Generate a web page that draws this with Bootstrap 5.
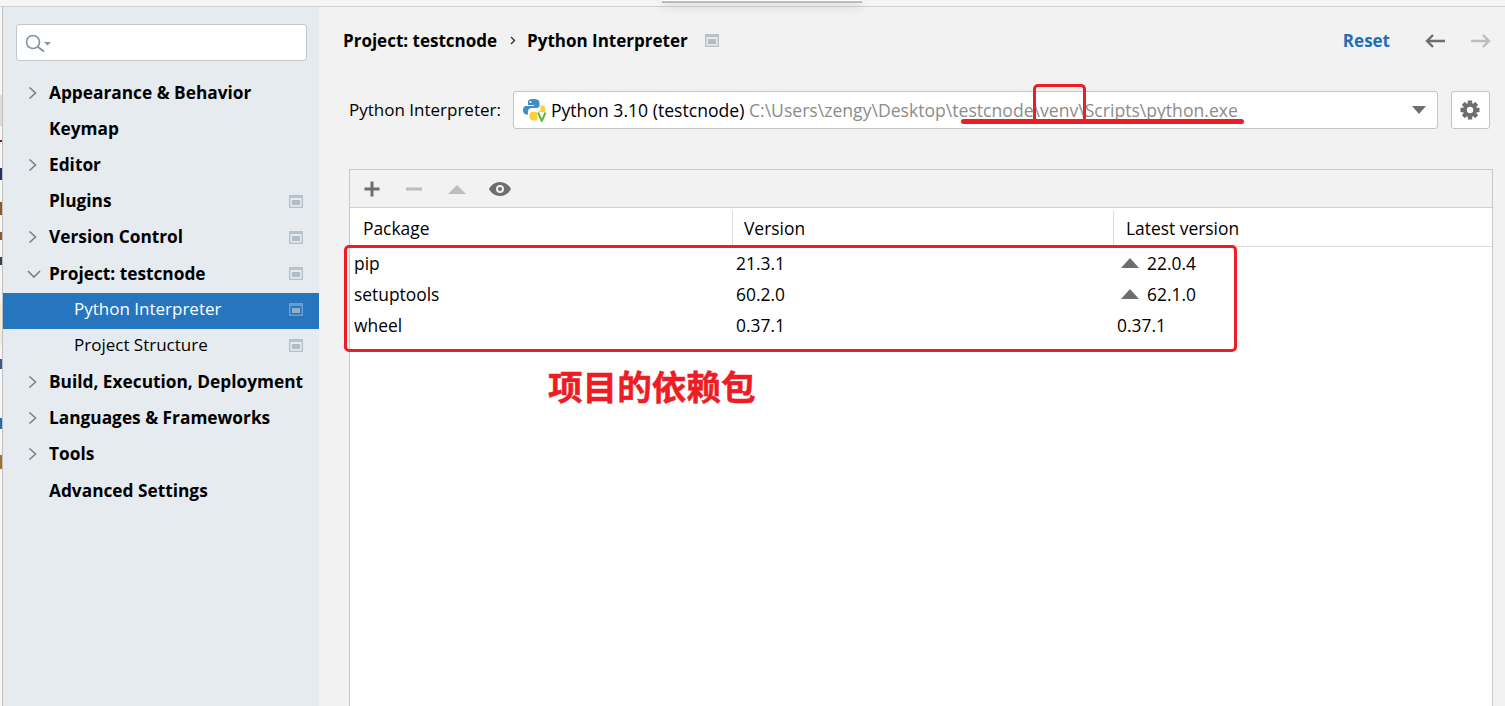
<!DOCTYPE html>
<html lang="en">
<head>
<meta charset="UTF-8">
<title>Settings</title>
<link href="https://cdn.jsdelivr.net/npm/bootstrap@5.3.0/dist/css/bootstrap.min.css" rel="stylesheet">
<style>
    html, body { height: 100%; overflow: hidden; }
    body {
        background: #f2f2f2;
        color: #000;
        font-family: "Open Sans", "Noto Sans CJK SC", sans-serif;
        font-size: 17px;
        line-height: 24px;
    }
    .topstrip { height: 7px; background: #f5f5f5; border-bottom: 1px solid #d1d1d1; }
    .popup-edge {
        position: absolute; left: 662px; top: 0; width: 200px; height: 3px;
        background: #fff; border-bottom: 2px solid #bbb; box-shadow: 0 3px 10px rgba(0,0,0,.2);
    }
    .main-area { height: 699px; }
    /* scraps of the window behind, showing along the left edge */
    .edge {
        width: 3px; flex: none; border-right: 1px solid #c0c0c0;
        background: linear-gradient(to bottom,
            #f6f6f6 0 88px, #dcdcdc 88px 119px, #f6f6f6 119px 133px, #7a1f1f 133px 135px,
            #f6f6f6 135px 161px, #1e2f6a 161px 173px, #f6f6f6 173px 195px, #8a5a2a 195px 208px,
            #f6f6f6 208px 225px, #8a5a2a 225px 233px, #f6f6f6 233px 250px, #33405a 250px 258px,
            #f6f6f6 258px 296px, #efecd9 296px 338px, #f6f6f6 338px 352px, #3a5a8a 352px 362px,
            #f6f6f6 362px 411px, #2a6ab0 411px 422px, #f6f6f6 422px 448px, #a5702a 448px 462px,
            #f6f6f6 462px);
    }
    .side { width: 316px; flex: none; background: #e6ebf0; padding-top: 17px; }
    .searchbox {
        margin: 0 13px; height: 37px; width: 291px; background: #fff;
        border: 1px solid #c4c7ca; border-radius: 3px; padding-left: 7px;
    }
    .tree { margin-top: 15px; }
    .tree-row { height: 36.2px; padding: 0 16px 3px 46px; }
    .tree-row.sub { padding-left: 71px; padding-bottom: 4px; }
    .tree-row.on { background: #2675bf; color: #fff; }
    .tree-row b { font-weight: 700; font-size: 17.3px; white-space: nowrap; }
    .crumbs b { font-weight: 700; }
    .chev { position: absolute; margin-left: -22px; }
    .sq { flex: none; }
    .content { min-width: 0; padding: 0 13px 0 24px; }
    .crumbs { height: 68px; padding-bottom: 1px; }
    .crumb-sep { margin: 0 7px 0 9px; }
    .crumb-sq { margin-left: 17px; }
    .reset { color: #1f6fb5; font-weight: 700; text-decoration: none; }
    .back-arrow { margin-left: 34px; }
    .interp { height: 38px; margin-top: 16px; padding-left: 6px; }
    .combo {
        width: 925px; height: 38px; margin-left: 12px; background: #fff; font-size: 17.6px;
        border: 1px solid #c4c4c4; border-radius: 3px; padding: 0 11px 0 9px;
    }
    .path { color: #8c8c8c; }
    .gearbtn {
        width: 39px; height: 38px; margin-left: 13px; background: #fff;
        border: 1px solid #c4c4c4; border-radius: 3px;
    }
    .pkgs {
        margin: 40px 0 0 6px; height: 560px; width: 1144px; background: #fff; font-size: 17.4px;
        border: 1px solid #c9c9c9; border-bottom: 0;
    }
    .pkg-tools { height: 38px; background: #f2f2f2; border-bottom: 1px solid #d1d1d1; padding-left: 13px; }
    .pkg-tools svg + svg { margin-left: 24px; }
    .pkg-tools svg:last-child { margin-left: 21px; }
    .pkg-head { height: 39px; border-bottom: 1px solid #dcdcdc; }
    .col-name { width: 383px; flex: none; }
    .col-ver { width: 381px; flex: none; }
    .pkg-head > div { height: 34px; margin-top: 3px; padding: 0 11px; border-right: 1px solid #dcdcdc; display: flex; align-items: center; }
    .pkg-head > div:first-child { padding-left: 13px; }
    .pkg-head > div:last-child { border-right: 0; padding-left: 12px; }
    .pkg-row { height: 31px; }
    .pkg-row .col-name { padding-left: 4px; }
    .pkg-row .col-ver { padding-left: 3px; }
    .pkg-row .newer { padding-left: 7px; }
    .pkg-row .same { padding-left: 3px; }
    .redbox { position: absolute; border: 3px solid #ee1c25; border-radius: 5px; }
    .redbar { position: absolute; background: #ee1c25; border-radius: 3px; height: 5px; }
    .note {
        position: absolute; left: 548px; top: 363px; color: #ee1c25;
        font-family: "Noto Sans CJK SC", sans-serif; font-weight: 700; font-size: 34.6px; line-height: 44px;
        -webkit-text-stroke: .5px #ee1c25;
    }
</style>
</head>
<body>
<svg width="0" height="0" class="position-absolute">
    <symbol id="sq" viewBox="0 0 14 13">
        <rect width="14" height="13" fill="#b8c2cb"/>
        <rect x="1.500" y="3" width="11" height="8.500" fill="#e6ebf0"/>
        <rect x="3" y="5" width="8" height="5" fill="#b0bcc6"/>
    </symbol>
    <symbol id="sq-on" viewBox="0 0 14 13">
        <rect width="14" height="13" fill="#6b9ccc"/>
        <rect x="1.500" y="3" width="11" height="8.500" fill="#2675bf"/>
        <rect x="3" y="5" width="8" height="5" fill="#8fb0cd"/>
    </symbol>
    <symbol id="chev" viewBox="0 0 12 14">
        <path d="M2.500 1.500l6 5.500-6 5.500" fill="none" stroke="#7f7f7f" stroke-width="1.600"/>
    </symbol>
</svg>

<div class="topstrip"></div>
<div class="popup-edge"></div>

<div class="d-flex main-area">
    <div class="edge"></div>
    <div class="side">
        <div class="searchbox d-flex align-items-center">
            <svg width="28" height="20" viewBox="0 0 28 20" fill="none">
                <circle cx="9" cy="9" r="6.500" stroke="#87929b" stroke-width="1.600"/>
                <path d="M14 14l6 4.500" stroke="#87929b" stroke-width="2"/>
                <path d="M20 9h7l-3.500 3.500z" fill="#87929b"/>
            </svg>
        </div>
        <div class="tree">
            <div class="tree-row d-flex align-items-center"><svg class="chev" width="12" height="14"><use href="#chev"/></svg><b>Appearance &amp; Behavior</b></div>
            <div class="tree-row d-flex align-items-center"><b>Keymap</b></div>
            <div class="tree-row d-flex align-items-center"><svg class="chev" width="12" height="14"><use href="#chev"/></svg><b>Editor</b></div>
            <div class="tree-row d-flex align-items-center justify-content-between"><b>Plugins</b><svg class="sq" width="14" height="13"><use href="#sq"/></svg></div>
            <div class="tree-row d-flex align-items-center justify-content-between"><svg class="chev" width="12" height="14"><use href="#chev"/></svg><b>Version Control</b><svg class="sq" width="14" height="13"><use href="#sq"/></svg></div>
            <div class="tree-row d-flex align-items-center justify-content-between"><svg class="chev" width="14" height="12" viewBox="0 0 14 12" fill="none"><path d="M1 3l6 6 6-6" stroke="#7f7f7f" stroke-width="1.600"/></svg><b>Project: testcnode</b><svg class="sq" width="14" height="13"><use href="#sq"/></svg></div>
            <div class="tree-row sub on d-flex align-items-center justify-content-between"><span>Python Interpreter</span><svg class="sq" width="14" height="13"><use href="#sq-on"/></svg></div>
            <div class="tree-row sub d-flex align-items-center justify-content-between"><span>Project Structure</span><svg class="sq" width="14" height="13"><use href="#sq"/></svg></div>
            <div class="tree-row d-flex align-items-center"><svg class="chev" width="12" height="14"><use href="#chev"/></svg><b>Build, Execution, Deployment</b></div>
            <div class="tree-row d-flex align-items-center"><svg class="chev" width="12" height="14"><use href="#chev"/></svg><b>Languages &amp; Frameworks</b></div>
            <div class="tree-row d-flex align-items-center"><svg class="chev" width="12" height="14"><use href="#chev"/></svg><b>Tools</b></div>
            <div class="tree-row d-flex align-items-center"><b>Advanced Settings</b></div>
        </div>
    </div>

    <div class="content flex-grow-1">
        <div class="crumbs d-flex align-items-center">
            <b>Project: testcnode</b>
            <svg class="crumb-sep" width="14" height="12" viewBox="0 0 14 12" fill="none"><path d="M5 2l3.500 3.500L5 9" stroke="#333" stroke-width="1.400"/></svg>
            <b>Python Interpreter</b>
            <svg class="crumb-sq" width="14" height="13"><use href="#sq"/></svg>
            <a class="reset ms-auto" href="#">Reset</a>
            <svg class="back-arrow" width="22" height="16" viewBox="0 0 22 16" fill="none"><path d="M21 8H3M9 2L3 8l6 6" stroke="#6e6e6e" stroke-width="2.400"/></svg>
            <svg class="ms-4" width="22" height="16" viewBox="0 0 22 16" fill="none"><path d="M1 8h18M13 2l6 6-6 6" stroke="#bdbdbd" stroke-width="2.400"/></svg>
        </div>
        <div class="interp d-flex align-items-center">
            <span class="text-nowrap">Python Interpreter:</span>
            <div class="combo d-flex align-items-center flex-shrink-0">
                <svg class="me-1" width="24" height="24" viewBox="0 0 24 24">
                    <path d="M10 1c-4 0-5 1.500-5 3.500V7h6v1H3C1 8 0 10 0 12s1 4.500 3 4.500h2v-3c0-2 1.500-3.500 3.500-3.500H14c1.500 0 2.500-1 2.500-2.500v-3C16.500 2 14 1 10 1z" fill="#3f8fc4"/>
                    <circle cx="7.500" cy="4" r="1" fill="#fff"/>
                    <path d="M17.500 7.500v3c0 2-1.500 3.500-3.500 3.500H9c-1.500 0-2.500 1-2.500 2.500v3c0 1.800 2.500 3 5 3 1 0 2 0 3-.3V15h7.500c.5-1 .5-2 .5-3 0-2-1-4.500-3-4.500z" fill="#fdcf3c"/>
                    <path d="M14.500 14l3.800 9h1l3.700-9" fill="#fff" stroke="#fff" stroke-width="2"/>
                    <path d="M15 14.500l3.800 8.500 3.700-8.500" fill="none" stroke="#62b543" stroke-width="2"/>
                </svg>
                <span class="text-nowrap">Python 3.10 (testcnode) <span class="path">C:\Users\zengy\Desktop\testcnode\venv\Scripts\python.exe</span></span>
                <svg class="ms-auto" width="14" height="8" viewBox="0 0 14 8"><path d="M0 0h14L7 8z" fill="#6e6e6e"/></svg>
            </div>
            <div class="gearbtn d-flex align-items-center justify-content-center flex-shrink-0">
                <svg width="20" height="20" viewBox="0 0 20 20">
                    <g fill="#6e6e6e">
                        <rect x="7.800" y="0.500" width="4.400" height="19" rx=".6"/>
                        <rect x="7.800" y="0.500" width="4.400" height="19" rx=".6" transform="rotate(45 10 10)"/>
                        <rect x="7.800" y="0.500" width="4.400" height="19" rx=".6" transform="rotate(90 10 10)"/>
                        <rect x="7.800" y="0.500" width="4.400" height="19" rx=".6" transform="rotate(135 10 10)"/>
                        <circle cx="10" cy="10" r="7"/>
                    </g>
                    <circle cx="10" cy="10" r="3.200" fill="#fff"/>
                </svg>
            </div>
        </div>
        <div class="pkgs">
            <div class="pkg-tools d-flex align-items-center">
                <svg width="18" height="18" viewBox="0 0 18 18"><path d="M9 1.500v15M1.500 9h15" stroke="#6e6e6e" stroke-width="3"/></svg>
                <svg width="18" height="18" viewBox="0 0 18 18"><path d="M1 9h16" stroke="#bdbdbd" stroke-width="3"/></svg>
                <svg width="20" height="18" viewBox="0 0 20 18"><path d="M1 14L10 5l9 9z" fill="#bdbdbd"/></svg>
                <svg width="24" height="18" viewBox="0 0 24 18"><path fill-rule="evenodd" d="M12 2C7 2 3 5 1 9c2 4 6 7 11 7s9-3 11-7c-2-4-6-7-11-7zm0 3a4 4 0 1 1 0 8 4 4 0 0 1 0-8z" fill="#6e6e6e"/><circle cx="12" cy="9" r="2" fill="#6e6e6e"/></svg>
            </div>
            <div class="pkg-head d-flex">
                <div class="col-name">Package</div>
                <div class="col-ver">Version</div>
                <div class="flex-grow-1">Latest version</div>
            </div>
            <div class="pkg-rows">
                <div class="pkg-row d-flex align-items-center">
                    <div class="col-name">pip</div><div class="col-ver">21.3.1</div>
                    <div class="newer d-flex align-items-center gap-2"><svg width="18" height="10" viewBox="0 0 18 10"><path d="M0 10L9 0l9 10z" fill="#6e6e6e"/></svg><span>22.0.4</span></div>
                </div>
                <div class="pkg-row d-flex align-items-center">
                    <div class="col-name">setuptools</div><div class="col-ver">60.2.0</div>
                    <div class="newer d-flex align-items-center gap-2"><svg width="18" height="10" viewBox="0 0 18 10"><path d="M0 10L9 0l9 10z" fill="#6e6e6e"/></svg><span>62.1.0</span></div>
                </div>
                <div class="pkg-row d-flex align-items-center">
                    <div class="col-name">wheel</div><div class="col-ver">0.37.1</div>
                    <div class="same">0.37.1</div>
                </div>
            </div>
        </div>
    </div>
</div>

<!-- annotations drawn on the screenshot -->
<div class="redbar" style="left:961px;top:119px;width:283px"></div>
<div class="redbox" style="left:1033px;top:84px;width:53px;height:37px;border-bottom:0;border-radius:5px 5px 0 0"></div>
<div class="redbox" style="left:344px;top:245px;width:893px;height:107px"></div>
<div class="note">项目的依赖包</div>

<script src="https://cdn.jsdelivr.net/npm/bootstrap@5.3.0/dist/js/bootstrap.bundle.min.js"></script>
</body>
</html>
